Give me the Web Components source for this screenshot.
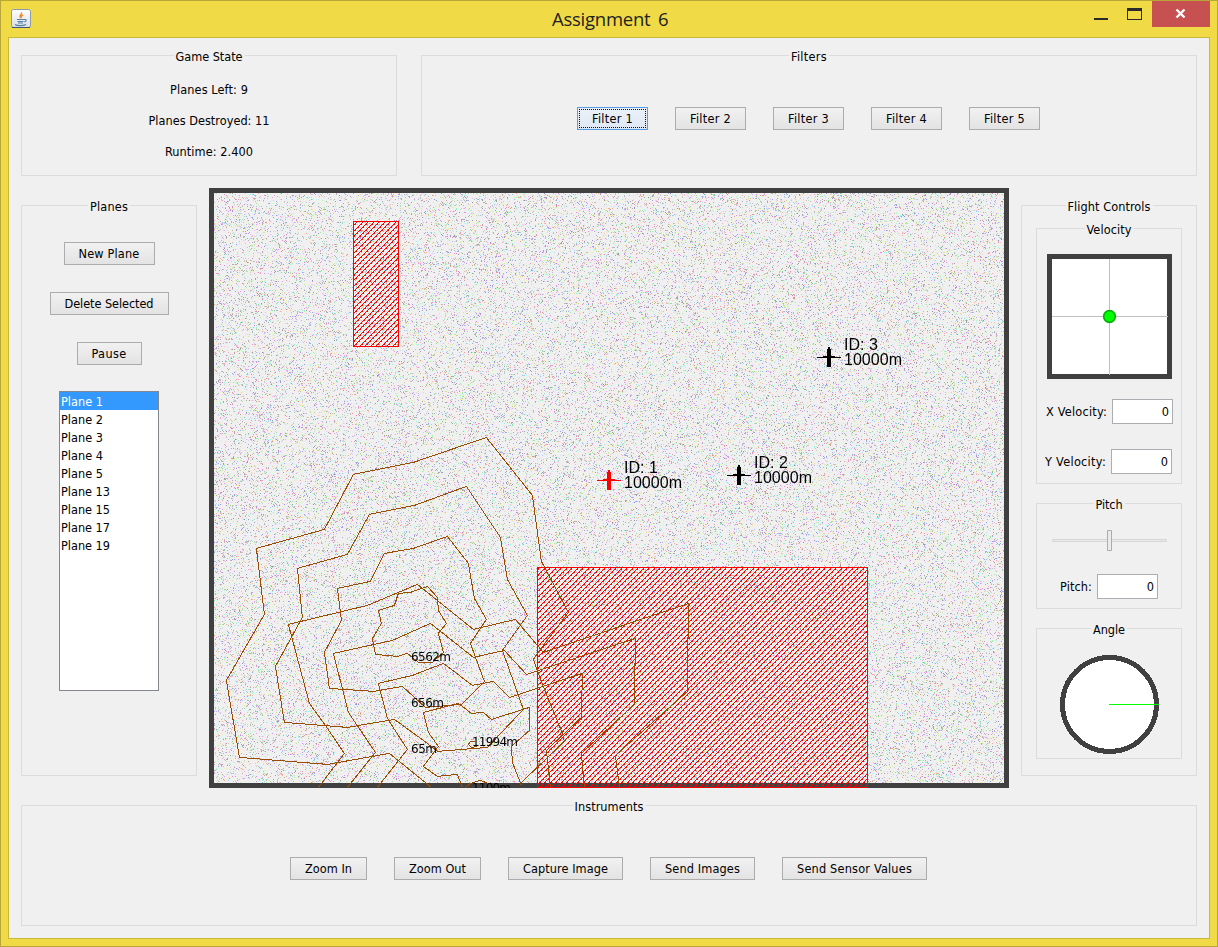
<!DOCTYPE html>
<html lang="en"><head><meta charset="utf-8"><title>Assignment 6</title>
<style>html,body{margin:0;height:100%;overflow:hidden}body{font:12.6px/15px "DejaVu Sans Condensed","DejaVu Sans",sans-serif;font-stretch:condensed;color:#000}
.top{display:flex;gap:24px;padding:0 12px;margin-top:17px}
.game{width:376px;height:121px}.filters{width:776px;height:121px}
.stats{padding-top:18px;display:grid;row-gap:16px;justify-items:center}
.row{display:flex;justify-content:center;gap:27px;padding:43px 1px 0 0}
.mid{display:flex;gap:12px;padding:0 12px;margin-top:12px}
.side{width:176px;height:571px;margin-top:17px}
.actions{display:flex;flex-direction:column;align-items:center;gap:27px;padding-top:28px}
.stack{padding:14px 14px 0}
.bottom{padding:0 12px;margin-top:17px}</style></head><body>
<app-window heading="Assignment 6">
<div class="top">
 <group-box class="game" caption="Game State"><div class="stats"><ui-text w="78">Planes Left: 9</ui-text><ui-text w="121">Planes Destroyed: 11</ui-text><ui-text w="88">Runtime: 2.400</ui-text></div></group-box>
 <group-box class="filters" caption="Filters"><div class="row"><ui-button w="71" focus>Filter 1</ui-button><ui-button w="71">Filter 2</ui-button><ui-button w="71">Filter 3</ui-button><ui-button w="71">Filter 4</ui-button><ui-button w="71">Filter 5</ui-button></div></group-box>
</div>
<div class="mid">
 <group-box class="side" caption="Planes"><div class="actions"><ui-button w="91">New Plane</ui-button><ui-button w="119">Delete Selected</ui-button><ui-button w="65">Pause</ui-button></div><plane-list></plane-list></group-box>
 <radar-view></radar-view>
 <group-box class="side" caption="Flight Controls">
  <div class="stack">
  <group-box caption="Velocity" style="height:256px"><velocity-pad></velocity-pad>
   <num-field style="padding:20px 8px 0 0">X Velocity:</num-field><num-field style="padding:25px 9px 0 0">Y Velocity:</num-field></group-box>
  <group-box caption="Pitch" style="height:106px;margin-top:19px"><pitch-slider></pitch-slider><num-field style="padding:23px 23px 0 0">Pitch:</num-field></group-box>
  <group-box caption="Angle" style="height:131px;margin-top:19px"><angle-dial></angle-dial></group-box>
  </div></group-box>
</div>
<div class="bottom"><group-box caption="Instruments" style="height:121px"><div class="row"><ui-button w="77">Zoom In</ui-button><ui-button w="87">Zoom Out</ui-button><ui-button w="115">Capture Image</ui-button><ui-button w="105">Send Images</ui-button><ui-button w="145">Send Sensor Values</ui-button></div></group-box></div>
</app-window>
<script>
const define=(name,html,setup)=>customElements.define(name,class extends HTMLElement{
 constructor(){super();this.attachShadow({mode:'open'})}
 connectedCallback(){this.shadowRoot.innerHTML=html;if(setup)setup(this,this.shadowRoot)}
});
define('app-window',`<style>
:host{display:block;box-sizing:border-box;width:1218px;height:947px;background:#f0db46;border:1px solid #b8a638;padding:0 7px 7px}
header{height:36px;display:flex;align-items:flex-start}
.logo{margin:8px 0 0 3px;width:20px;height:20px}
h1{margin:8px 0 0 521px;font:18.5px/20px "Open Sans",sans-serif;color:#222;width:120px;white-space:nowrap;word-spacing:3px;letter-spacing:-.25px}
.btns{display:flex;width:117px;height:26px;margin-left:auto}
main{box-sizing:border-box;height:902px;border:1px solid #c9b73b;background:#f0f0f0;display:flex;flex-direction:column}
</style><header><svg class="logo" viewBox="0 0 20 20"><defs><linearGradient id="g" x2="0" y2="1"><stop stop-color="#fff"/><stop offset="1" stop-color="#d9dde2"/></linearGradient></defs><rect x=".5" y=".5" width="19" height="18" rx="2" fill="url(#g)" stroke="#8a9aa8"/><path d="M1 18.5h18" stroke="#3c5878"/><path d="M10.500 3.500C11 6 7.500 6 9.500 9M12 6C9.500 7 10 8 10.500 9" fill="none" stroke="#f08a30" stroke-width="1.500"/><path d="M6 10.500h7M6.500 12.500h6M7 14h5M4 15.500c2 1.500 8 1.500 11 0M13 10.500c3-.5 2.500 2 .3 2.500" fill="none" stroke="#5580a5" stroke-width="1.100"/></svg><h1></h1>
<div class="btns"><svg width="117" height="26" shape-rendering="crispEdges"><path d="M1 17h14v2H1z" fill="#2a2a2a"/><path d="M34 7h15v12H34zM35 10v8h13v-8z" fill="#2a2a2a" fill-rule="evenodd"/><path d="M59 0h58v26H59z" fill="#c75050"/><path d="M83.500 8.500l8 8m0-8l-8 8" stroke="#fff" stroke-width="2.400" shape-rendering="auto"/></svg></div></header><main><slot></slot></main>`,(e,r)=>r.querySelector('h1').textContent=e.getAttribute('heading'));
define('group-box',`<style>:host{display:block;box-sizing:border-box;border:1px solid #dcdcdc;flex:none}
.cap{display:flex;justify-content:center;height:15px;margin-top:-7px}.cap span{background:#f0f0f0;padding:0 2px;height:15px}</style><div class="cap"><span><ui-text></ui-text></span></div><slot></slot>`,(e,r)=>{
 const widths={'Game State':67,Filters:36,Planes:38,'Flight Controls':83,Velocity:45,Pitch:27,Angle:32,Instruments:69};
 const c=e.getAttribute('caption'),t=r.querySelector('ui-text');t.setAttribute('w',widths[c]);t.textContent=c});
// Text with a known advance width, spread evenly between its letters
define('ui-text',`<style>:host{display:block;white-space:nowrap}span{display:inline-block;line-height:15px;vertical-align:top}</style><span><slot></slot></span>`,(e,r)=>{
 const s=r.querySelector('span');
 requestAnimationFrame(()=>fit());fit();
 function fit(){const w=+e.getAttribute('w');if(!w||!e.textContent)return;s.style.letterSpacing='0px';const n=e.textContent.trim().length,d=(w-s.getBoundingClientRect().width)/n;s.style.letterSpacing=d+'px'}});
define('ui-button',`<style>:host{display:block}button{all:unset;box-sizing:border-box;height:23px;border:1px solid #acacac;background:linear-gradient(#f1f1f1,#e3e3e3);display:flex;justify-content:center;align-items:center;position:relative}
:host([focus]) button{border-color:#569de5;background:linear-gradient(#ecf1f8,#dfe8f3)}:host([focus]) button::after{content:"";position:absolute;inset:1px;border:1px dotted #111}</style><button><ui-text></ui-text></button>`,(e,r)=>{const w=+e.getAttribute('w');r.querySelector('button').style.width=w+'px';const t=r.querySelector('ui-text');t.setAttribute('w',w-30);t.textContent=e.textContent});
define('plane-list',`<style>:host{display:block;box-sizing:border-box;width:100px;height:300px;border:1px solid #828790;background:#fff;margin:26px 0 0 37px}
div{height:18px;padding:2px 0 0 1px;box-sizing:border-box}div.sel{background:#39f;color:#fff}</style>`,(e,r)=>[1,2,3,4,5,13,15,17,19].forEach(n=>{const d=document.createElement('div');if(n==1)d.className='sel';const t=document.createElement('ui-text');t.setAttribute('w',n>9?49:42);t.textContent='Plane '+n;d.append(t);r.append(d)}));
define('num-field',`<style>:host{display:flex;justify-content:flex-end;align-items:center;gap:5px}.v{box-sizing:border-box;width:61px;height:25px;border:1px solid #abadb3;background:#fff;text-align:right;padding:4px 3px 0 0;line-height:15px}</style><ui-text></ui-text><div class="v">0</div>`,(e,r)=>{const t=r.querySelector('ui-text'),s=e.textContent;t.setAttribute('w',s=='Pitch:'?32:61);t.textContent=s});
define('velocity-pad',`<style>:host{display:block;margin:17px 0 0 10px;height:125px}svg{display:block}</style><svg width="125" height="125"><path d="M2.500 2.500h120v120h-120z" fill="#fff" stroke="#404040" stroke-width="5"/><path d="M62.500 5v116M5 62.500h116" stroke="#c0c0c0"/><circle cx="62.500" cy="62.500" r="5.800" fill="#0f0" stroke="#00b300" stroke-width="1.700"/></svg>`);
define('pitch-slider',`<style>:host{display:block;margin:18px 0 0 14px;height:21px}svg{display:block}</style><svg width="117" height="21"><path d="M1.500 9.500h114v2h-114z" fill="#e7eaea" stroke="#d6d6d6"/><path d="M56.500.5h4v20h-4z" fill="#ebebeb" stroke="#acacac"/></svg>`);
define('angle-dial',`<style>:host{display:block;margin:18px 0 0 22px;height:100px}svg{display:block}</style><svg width="102" height="100" shape-rendering="crispEdges"><circle cx="50.500" cy="49.500" r="47" fill="#fff" stroke="#404040" stroke-width="5"/><path d="M50 49.500h50" stroke="#0f0"/></svg>`);
const contours=[
'520,783 564,741 562,733 542,684 533,659 540,649 568,612 541,561 532,495 486,437 413,462 353,474 324,529 256,548 264,614 226,680 239,757 327,764 389,753 431,787',
'523,709 502,650 527,615 507,579 500,537 466,486 414,505 369,514 347,554 297,568 302,617 275,666 284,722 347,727 394,719 423,740 437,751 487,747 523,709',
'447,536 413,548 384,553 370,581 337,588 341,620 324,652 329,688 373,691 402,686 425,707 461,704 484,681 470,643 486,619 474,598 468,563 447,536',
'427,586 410,592 398,593 394,605 378,610 381,623 372,638 375,654 397,656 407,653 418,662 432,662 443,652 438,633 446,623 438,610 437,597 427,586',
'318,787 344,753 325,725 309,703 288,624 367,605 417,584 473,629 515,619 543,652 688,603 687,691 615,755 619,787',
'347,787 375,752 348,712 333,653 392,640 430,623 473,657 504,650 526,674 635,638 634,704 581,753 584,787',
'377,787 407,749 387,718 378,683 412,675 443,663 472,685 493,681 509,697 582,673 581,717 546,750 550,787',
'462,787 457,774 437,776 423,766 438,746 428,732 423,712 458,703 471,713 483,712 491,719 529,707 529,730 511,746 512,762 521,785',
'475,741 470,741 468,744 471,747 477,746','465,787 470,783 480,780 490,784'];
define('radar-view',`<style>:host{display:grid;width:800px;height:600px;flex:none}canvas,svg{grid-area:1/1;display:block}svg{overflow:hidden}.c{font:12px "DejaVu Sans"}.p{font:16px "Liberation Sans"}</style><canvas width="800" height="600"></canvas><svg width="800" height="600" viewBox="209 188 800 600"></svg>`,(e,r)=>{
 const c=r.querySelector('canvas').getContext('2d');c.fillStyle='#404040';c.fillRect(0,0,800,600);c.fillStyle='#f0f0f0';c.fillRect(5,5,790,590);
 let seed=71;const rnd=()=>{seed=(seed+0x6D2B79F5)|0;let t=Math.imul(seed^seed>>>15,1|seed);t=t+Math.imul(t^t>>>7,61|t)^t;return((t^t>>>14)>>>0)/4294967296};
 for(let y=5;y<595;y++)for(let x=5;x<795;x++)if(rnd()<.18){const v=()=>140+Math.floor(rnd()*116);c.fillStyle=`rgb(${v()},${v()},${v()})`;c.fillRect(x,y,1,1)}
 const zone=(x,y,w,h)=>{c.fillStyle='#f00';c.fillRect(x,y,w,1);c.fillRect(x,y+h-1,w,1);c.fillRect(x,y,1,h);c.fillRect(x+w-1,y,1,h);
  for(let j=y;j<y+h;j++)for(let i=x;i<x+w;i++){const m=(i+j)%11;if(m==0||m==5||((m==1||m==6)&&j%3==0))c.fillRect(i,j,1,1)}};
 zone(144,33,46,126);zone(328,379,331,221);
 const plane=(x,y,col,n)=>`<path fill="${col}" shape-rendering="crispEdges" d="M${x-1} ${y-10}h2v2h1v7h4v1h6v1h-10v9h-4v-9h-10v-1h6v-1h4v-7h1z"/><g class="p"><text x="${x+15}" y="${y-7}">ID: ${n}</text><text x="${x+15}" y="${y+8}" textLength="58">10000m</text></g>`;
 const label=(x,y,t,w)=>`<text class="c" x="${x}" y="${y}" textLength="${w}">${t}</text>`;
 r.querySelector('svg').innerHTML=contours.map(p=>`<polyline points="${p}" transform="translate(.4 .4)" fill="none" stroke="#994c00" shape-rendering="crispEdges"/>`).join('')+label(411,661,'6562m',40)+label(411,707,'656m',33)+label(411,753,'65m',26)+label(472,746,'11994m',46)+label(472,792,'1100m',39)+plane(609,480,'#f00',1)+plane(739,475,'#000',2)+plane(829,357,'#000',3)});
</script></body></html>
